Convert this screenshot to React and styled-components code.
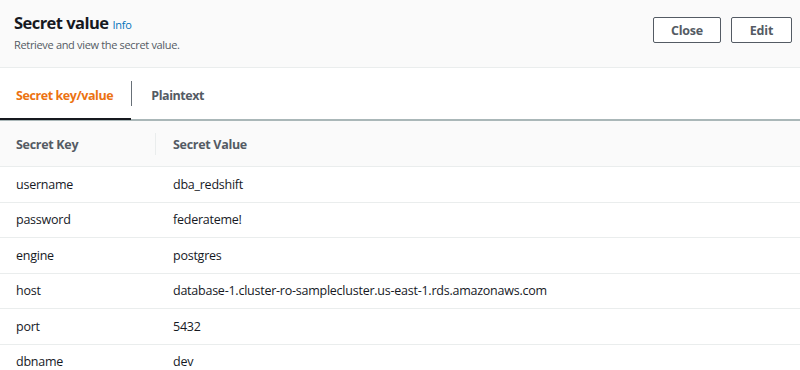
import styled, { createGlobalStyle } from 'styled-components';

const GlobalStyle = createGlobalStyle`
  html, body {
    margin: 0;
    padding: 0;
    background: #ffffff;
    font-family: "Open Sans", "Noto Sans", Arial, sans-serif;
    color: #16191f;
  }
`;

const rows = [
  ['username', 'dba_redshift'],
  ['password', 'federateme!'],
  ['engine', 'postgres'],
  ['host', 'database-1.cluster-ro-samplecluster.us-east-1.rds.amazonaws.com'],
  ['port', '5432'],
  ['dbname', 'dev'],
];

const Page = styled.div`
  width: 800px;
  height: 370px;
  overflow: hidden;
  background: #fff;
`;

const Header = styled.div`
  height: 68px;
  box-sizing: border-box;
  background: #fafafa;
  border-bottom: 1px solid #eaeded;
  display: flex;
  justify-content: space-between;
  align-items: flex-start;
  padding: 12px 8px 0 14px;
`;

const TitleRow = styled.div`
  display: flex;
  align-items: baseline;
  gap: 4px;
`;

const Title = styled.h2`
  margin: 0;
  font-size: 16.5px;
  font-weight: 700;
  line-height: 22px;
  letter-spacing: -0.55px;
`;

const InfoLink = styled.a`
  font-size: 11px;
  letter-spacing: -0.2px;
  color: #0073bb;
  text-decoration: none;
`;

const Subtitle = styled.div`
  font-size: 11px;
  line-height: 16px;
  letter-spacing: -0.33px;
  color: #545b64;
  margin-top: 3px;
`;

const Actions = styled.div`
  display: flex;
  gap: 10px;
  margin-top: 5px;
`;

const Button = styled.button`
  height: 26px;
  width: ${(p) => p.$w}px;
  background: #fff;
  border: 1px solid #545b64;
  border-radius: 2px;
  font-family: inherit;
  font-size: 12.5px;
  font-weight: 700;
  letter-spacing: -0.2px;
  color: #545b64;
  padding: 0;
  cursor: pointer;
`;

const Tabs = styled.div`
  height: 53px;
  box-sizing: border-box;
  display: flex;
  align-items: stretch;
  border-bottom: 2px solid #aab7b8;
`;

const Tab = styled.div`
  display: flex;
  align-items: center;
  padding: ${(p) => (p.$first ? '2px 18px 0 16px' : '2px 18px 0 19px')};
  font-size: 12.5px;
  font-weight: 700;
  letter-spacing: -0.42px;
  color: ${(p) => (p.$active ? '#ec7211' : '#545b64')};
  box-shadow: ${(p) => (p.$active ? 'inset 0 -2px 0 #16191f' : 'none')};
  margin-bottom: -1px;
`;

const Divider = styled.span`
  align-self: center;
  width: 1px;
  height: 25px;
  background: #687078;
  margin-top: -1px;
`;

const Table = styled.div`
  display: grid;
  grid-template-columns: 155px 1fr;
`;

const HeadCell = styled.div`
  height: 46px;
  box-sizing: border-box;
  display: flex;
  align-items: center;
  padding-top: 1px;
  padding-left: ${(p) => (p.$first ? '16px' : '18px')};
  background: #fafafa;
  border-bottom: 1px solid #eaeded;
  font-size: 12.5px;
  font-weight: 700;
  letter-spacing: -0.3px;
  color: #545b64;
  position: relative;
  ${(p) =>
    p.$first
      ? ''
      : `&::before {
    content: '';
    position: absolute;
    left: 0;
    top: 12px;
    bottom: 11px;
    width: 1px;
    background: #eaeded;
  }`}
`;

const Cell = styled.div`
  height: 35.5px;
  box-sizing: border-box;
  display: flex;
  align-items: center;
  padding-left: ${(p) => (p.$first ? '16px' : '18px')};
  border-bottom: 1px solid #eaeded;
  font-size: 12.5px;
  letter-spacing: -0.24px;
  color: #16191f;
  white-space: nowrap;
`;

export default function App() {
  return (
    <Page>
      <GlobalStyle />
      <Header>
        <div>
          <TitleRow>
            <Title>Secret value</Title>
            <InfoLink href="#">Info</InfoLink>
          </TitleRow>
          <Subtitle>Retrieve and view the secret value.</Subtitle>
        </div>
        <Actions>
          <Button $w={68}>Close</Button>
          <Button $w={61}>Edit</Button>
        </Actions>
      </Header>
      <Tabs>
        <Tab $active $first>
          Secret key/value
        </Tab>
        <Divider />
        <Tab>Plaintext</Tab>
      </Tabs>
      <Table>
        <HeadCell $first>Secret Key</HeadCell>
        <HeadCell>Secret Value</HeadCell>
        {rows.map(([k, v]) => [
          <Cell $first key={k + 'k'}>
            {k}
          </Cell>,
          <Cell key={k + 'v'}>{v}</Cell>,
        ])}
      </Table>
    </Page>
  );
}
